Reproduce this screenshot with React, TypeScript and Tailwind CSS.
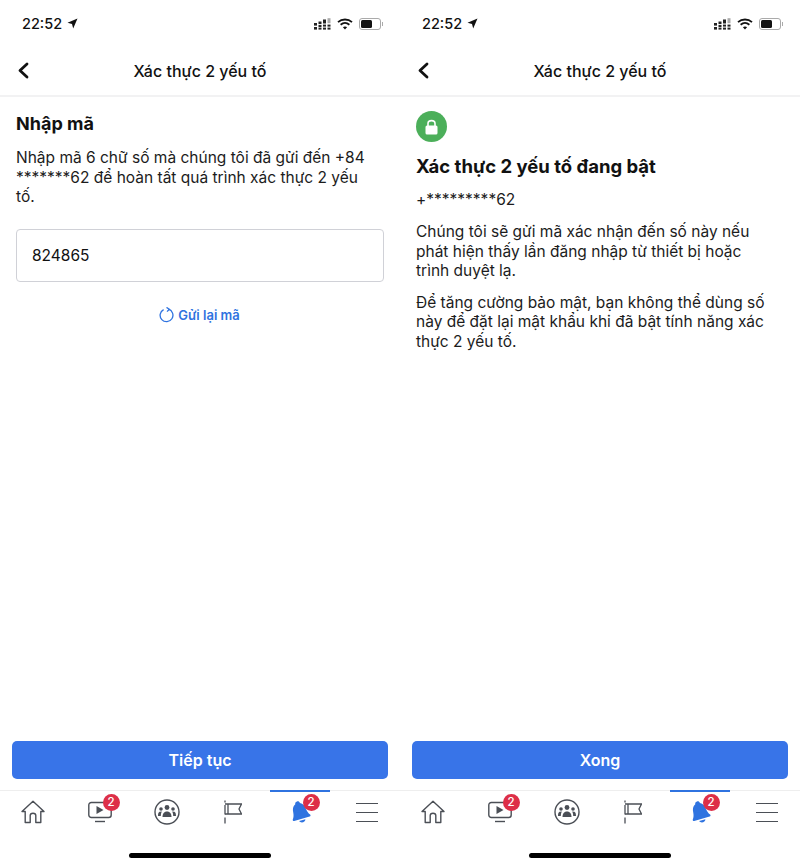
import type { ReactNode } from "react";

function StatusBar() {
  return (
    <div className="flex h-[47px] items-center justify-between pl-[22px] pr-[17px]">
      <div className="flex items-center gap-[5px] text-[14.5px] font-medium text-[#111]">
        <span>22:52</span>
        <svg width="11" height="11" viewBox="0 0 11 11">
          <path d="M10.5 0.5 L0.5 4.8 L5 6 L6.2 10.5 Z" fill="#111" />
        </svg>
      </div>
      <div className="flex items-center gap-[6px]">
        <svg width="17" height="12" viewBox="0 0 17 12" fill="#222">
          <rect x="0" y="5" width="3" height="2.6" />
          <rect x="0" y="9" width="3" height="2.6" />
          <rect x="4.5" y="3.5" width="3" height="2.6" />
          <rect x="4.5" y="7" width="3" height="2" />
          <rect x="4.5" y="9.6" width="3" height="2" />
          <rect x="9" y="1.5" width="3" height="4" />
          <rect x="9" y="6.6" width="3" height="2" />
          <rect x="9" y="9.6" width="3" height="2" />
          <rect x="13.5" y="0.2" width="3" height="5" fill="#aaa" />
          <rect x="13.5" y="6.6" width="3" height="2" />
          <rect x="13.5" y="9.6" width="3" height="2" />
        </svg>
        <svg width="16" height="12" viewBox="0 0 16 12" fill="none" stroke="#111" strokeWidth="1.8">
          <path d="M1 4.2 C5 0.6 11 0.6 15 4.2" />
          <path d="M3.6 6.8 C6.2 4.6 9.8 4.6 12.4 6.8" />
          <path d="M8 11.4 L5.9 9.2 C7.1 8.2 8.9 8.2 10.1 9.2 Z" fill="#111" stroke="none" />
        </svg>
        <div className="flex items-center">
          <div className="flex h-[12px] w-[22px] items-center rounded-[3px] border border-[#aaa] p-[1px]">
            <div className="h-full w-[11px] rounded-[1.5px] bg-[#111]" />
          </div>
          <div className="ml-[1px] h-[4px] w-[1px] bg-[#aaa]" />
        </div>
      </div>
    </div>
  );
}

function Badge() {
  return (
    <div className="absolute left-[36px] top-[3px] flex h-[17px] w-[17px] items-center justify-center rounded-full bg-[#dd2f48] text-[11.5px] font-medium text-white">
      2
    </div>
  );
}

function TabBar() {
  return (
    <div className="grid h-[47px] grid-cols-6 border-t border-[#eeeeee]">
      <div className="relative flex items-center justify-center pb-[4px]">
        <svg width="24" height="24" viewBox="0 0 24 24" fill="none" stroke="#4b4f56" strokeWidth="1.4" strokeLinejoin="round">
          <path d="M1 11.5 L12 1.2 L23 11.5 L19.8 11.5 L19.8 22.5 L14.8 22.5 L14.8 15.5 C14.8 12.5 9.2 12.5 9.2 15.5 L9.2 22.5 L4.2 22.5 L4.2 11.5 Z" />
        </svg>
      </div>
      <div className="relative flex items-center justify-center pb-[4px]">
        <svg width="24" height="22" viewBox="0 0 24 22" fill="none" stroke="#4b4f56" strokeWidth="1.4">
          <rect x="0.8" y="1.5" width="22.4" height="15" rx="2.5" />
          <path d="M8.5 5 L15.5 9 L8.5 13 Z" fill="#4b4f56" stroke="none" />
          <path d="M7 20.5 L17 20.5" />
        </svg>
        <Badge />
      </div>
      <div className="relative flex items-center justify-center pb-[4px]">
        <svg width="26" height="26" viewBox="0 0 26 26">
          <circle cx="13" cy="13" r="12" fill="none" stroke="#4b4f56" strokeWidth="1.4" />
          <circle cx="13" cy="8.5" r="2.4" fill="#4b4f56" />
          <circle cx="7" cy="10" r="1.8" fill="#4b4f56" />
          <circle cx="19" cy="10" r="1.8" fill="#4b4f56" />
          <path d="M8.5 18 C8.5 10.8 17.5 10.8 17.5 18 Z" fill="#4b4f56" />
          <path d="M4 17 C4 13 5.5 12.5 7.8 12.5 C7 14 6.8 15.5 6.8 17 Z" fill="#4b4f56" />
          <path d="M22 17 C22 13 20.5 12.5 18.2 12.5 C19 14 19.2 15.5 19.2 17 Z" fill="#4b4f56" />
        </svg>
      </div>
      <div className="relative flex items-center justify-center pb-[4px]">
        <svg width="18" height="24" viewBox="0 0 18 24" fill="none" stroke="#4b4f56" strokeWidth="1.3">
          <path d="M1 0.5 L1 2.5 M1 5 L1 14.5 M1 17.5 L1 23.5" />
          <path d="M1 4 L17.5 4 L15 9 L17.5 14 L1 14" />
          <path d="M4 4 L4 14" />
        </svg>
      </div>
      <div className="relative flex items-center justify-center pb-[4px]">
        <div className="absolute left-[3px] right-[3px] top-[-1px] h-[2px] bg-[#2f73e0]" />
        <svg width="22" height="25" viewBox="0 0 22 25" fill="#2f73e0">
          <g transform="rotate(-16 11 12)">
            <path d="M11 1 C12.4 1 13.4 2 13.4 3.2 C16.4 4.4 17.4 7.4 17.6 10.5 C17.8 13.2 18.6 15.4 20 17.2 C20.6 18 20 19 19 19 L3 19 C2 19 1.4 18 2 17.2 C3.4 15.4 4.2 13.2 4.4 10.5 C4.6 7.4 5.6 4.4 8.6 3.2 C8.6 2 9.6 1 11 1 Z" />
            <path d="M7.8 20.4 L14.2 20.4 C13.6 23.4 8.4 23.4 7.8 20.4 Z" />
          </g>
        </svg>
        <Badge />
      </div>
      <div className="relative flex items-center justify-center pb-[4px]">
        <div className="flex w-[22px] flex-col gap-[8px]">
          <div className="h-px bg-[#4b4f56]" />
          <div className="h-px bg-[#4b4f56]" />
          <div className="h-px bg-[#4b4f56]" />
        </div>
      </div>
    </div>
  );
}

function Phone({ button, children }: { button: string; children: ReactNode }) {
  return (
    <div className="flex h-[866px] flex-col bg-white">
      <StatusBar />
      <div className="relative flex h-[50px] items-center justify-center border-b-2 border-[#f2f2f3]">
        <svg className="absolute left-[17px] top-[15px]" width="12" height="17" viewBox="0 0 12 17" fill="none" stroke="#111" strokeWidth="2.8" strokeLinecap="round" strokeLinejoin="round">
          <path d="M10 2 L3 8.5 L10 15" />
        </svg>
        <span className="text-[16px] font-medium text-[#111]">Xác thực 2 yếu tố</span>
      </div>
      <div className="flex-1 px-[16px]">{children}</div>
      <div className="px-[12px] pb-[11px]">
        <div className="flex h-[38px] items-center justify-center rounded-[5px] bg-[#3874e8] text-[16px] font-semibold text-white">
          {button}
        </div>
      </div>
      <TabBar />
      <div className="flex h-[29px] justify-center pt-[16px]">
        <div className="h-[5px] w-[142px] rounded-full bg-black" />
      </div>
    </div>
  );
}

export default function App() {
  return (
    <div className="grid w-[800px] grid-cols-2 font-['Inter','Noto_Sans',sans-serif]">
      <Phone button="Tiếp tục">
        <h1 className="mt-[15px] text-[18px] leading-[24px] font-bold text-[#111]">Nhập mã</h1>
        <p className="mt-[12px] w-[360px] text-[15.5px] leading-[19.5px] text-[#1c1c1c]">
          Nhập mã 6 chữ số mà chúng tôi đã gửi đến +84 *******62 để hoàn tất quá trình xác thực 2 yếu tố.
        </p>
        <div className="mt-[22px] flex h-[53px] items-center rounded-[4px] border-[1.5px] border-[#d0d1d7] px-[15px] pt-[2px] text-[15.5px] text-[#111]">
          824865
        </div>
        <div className="mt-[24px] flex items-center justify-center gap-[3px] pr-[1px] text-[13px] font-semibold text-[#2f73e0]">
          <svg width="16" height="16" viewBox="0 0 16 16" fill="none" stroke="#2f73e0" strokeWidth="1.3">
            <path d="M9.5 2.2 A6.4 6.4 0 1 1 4.6 2.6" />
            <path d="M7.5 0.4 L10.4 2.3 L8 4.6" />
          </svg>
          <span>Gửi lại mã</span>
        </div>
      </Phone>
      <Phone button="Xong">
        <div className="mt-[14px] flex h-[31px] w-[31px] items-center justify-center rounded-full bg-[#4caf5a]">
          <svg width="13" height="16" viewBox="0 0 13 16">
            <path d="M3 7 L3 4.5 C3 0.6 10 0.6 10 4.5 L10 7" fill="none" stroke="white" strokeWidth="1.6" />
            <rect x="0.5" y="6.5" width="12" height="9" rx="1.5" fill="white" />
          </svg>
        </div>
        <h1 className="mt-[12px] text-[18.5px] leading-[24px] font-bold text-[#111]">Xác thực 2 yếu tố đang bật</h1>
        <p className="mt-[12px] text-[15.5px] leading-[20px] text-[#1c1c1c]">+*********62</p>
        <p className="mt-[12px] w-[360px] text-[15.5px] leading-[19.5px] text-[#1c1c1c]">
          Chúng tôi sẽ gửi mã xác nhận đến số này nếu phát hiện thấy lần đăng nhập từ thiết bị hoặc trình duyệt lạ.
        </p>
        <p className="mt-[12px] w-[360px] text-[15.5px] leading-[19.5px] text-[#1c1c1c]">
          Để tăng cường bảo mật, bạn không thể dùng số này để đặt lại mật khẩu khi đã bật tính năng xác thực 2 yếu tố.
        </p>
      </Phone>
    </div>
  );
}
